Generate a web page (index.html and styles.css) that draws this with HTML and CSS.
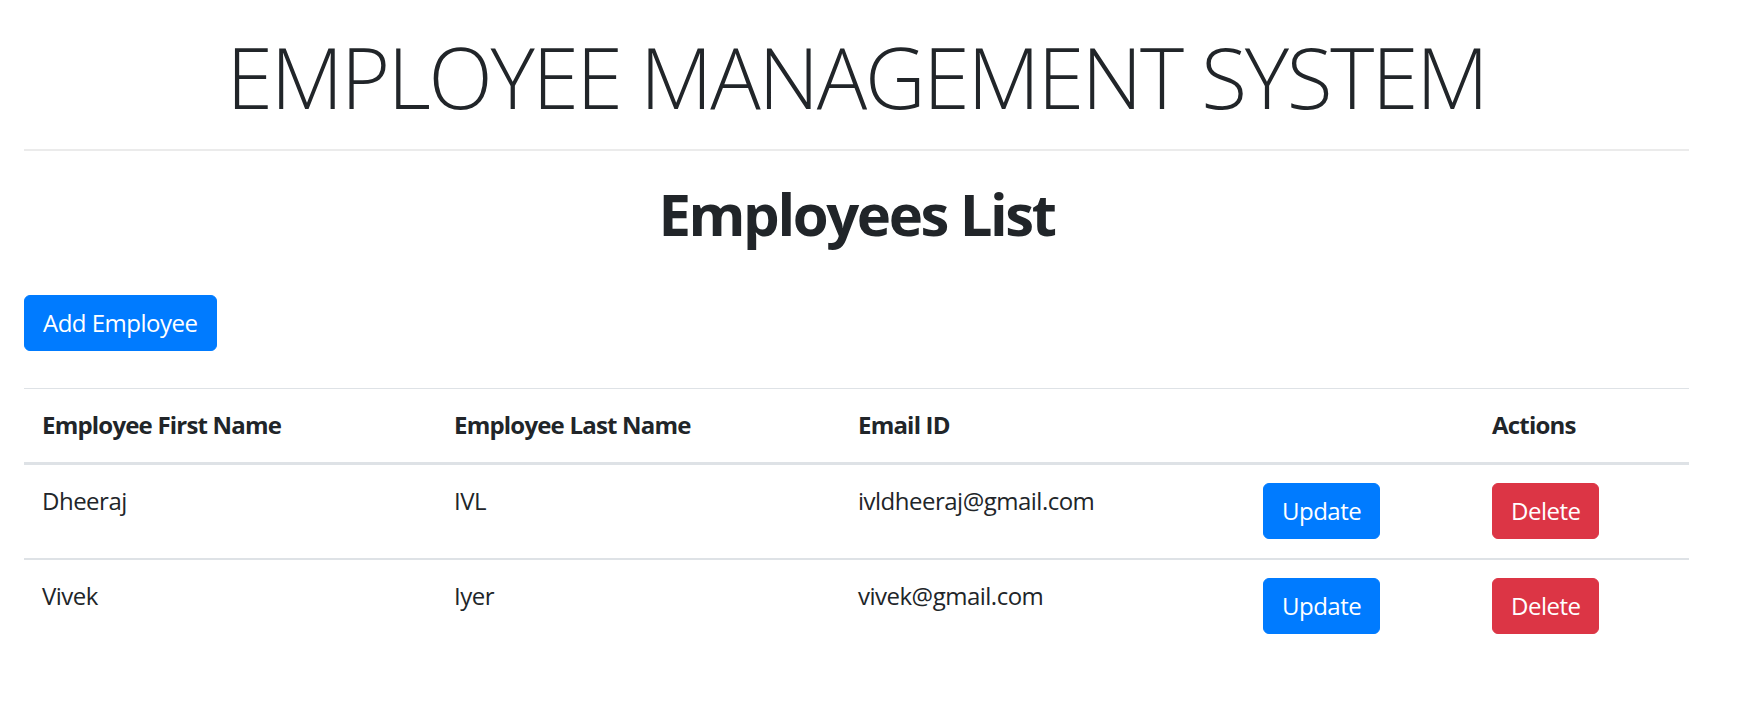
FILE: index.html
```html
<!DOCTYPE html>
<html lang="en">
<head>
<meta charset="utf-8">
<title>Employee Management System</title>
<link rel="stylesheet" href="styles.css">
</head>
<body>
<div class="page">
  <h1 class="display">EMPLOYEE MANAGEMENT SYSTEM</h1>
  <hr class="divider">
  <h2 class="list-title">Employees List</h2>
  <div class="toolbar">
    <button class="btn btn-primary">Add Employee</button>
  </div>
  <table class="emp-table">
    <colgroup>
      <col class="c1"><col class="c2"><col class="c3"><col class="c4"><col class="c5">
    </colgroup>
    <thead>
      <tr>
        <th>Employee First Name</th>
        <th>Employee Last Name</th>
        <th>Email ID</th>
        <th></th>
        <th>Actions</th>
      </tr>
    </thead>
    <tbody>
      <tr>
        <td>Dheeraj</td>
        <td>IVL</td>
        <td>ivldheeraj@gmail.com</td>
        <td><button class="btn btn-primary">Update</button></td>
        <td><button class="btn btn-danger">Delete</button></td>
      </tr>
      <tr>
        <td>Vivek</td>
        <td>Iyer</td>
        <td>vivek@gmail.com</td>
        <td><button class="btn btn-primary">Update</button></td>
        <td><button class="btn btn-danger">Delete</button></td>
      </tr>
    </tbody>
  </table>
</div>
</body>
</html>
```

FILE: styles.css
```css
* { box-sizing: border-box; }

body {
  margin: 0;
  background: #ffffff;
  color: #212529;
  font-family: "Open Sans", "Noto Sans", sans-serif;
  font-size: 24px;
  line-height: 1.5;
  letter-spacing: -0.5px;
}

.page {
  padding: 0 73px 0 24px;
}

.display {
  margin: 27px 0 0;
  font-size: 84px;
  font-weight: 300;
  line-height: 1.2;
  letter-spacing: -2.3px;
  text-align: center;
}

.divider {
  margin: 21px 0 0;
  border: 0;
  border-top: 2px solid #ebebeb;
  height: 0;
}

.list-title {
  margin: 27px 0 0;
  font-size: 58px;
  font-weight: 700;
  line-height: 72px;
  letter-spacing: -2.4px;
  text-align: center;
}

.toolbar {
  margin-top: 45px;
}

.btn {
  display: inline-block;
  font-family: inherit;
  font-size: 24px;
  line-height: 36px;
  font-weight: 400;
  letter-spacing: -0.5px;
  padding: 9px 18px;
  border: 1.5px solid transparent;
  border-radius: 6px;
  color: #ffffff;
  cursor: pointer;
}

.btn-primary {
  background: #007bff;
  border-color: #007bff;
}

.btn-danger {
  background: #dc3545;
  border-color: #dc3545;
}

.emp-table {
  margin-top: 37px;
  width: 100%;
  border-collapse: collapse;
  table-layout: fixed;
}

.c1 { width: 412px; }
.c2 { width: 404px; }
.c3 { width: 405px; }
.c4 { width: 229px; }
.c5 { width: 215px; }

.emp-table th,
.emp-table td {
  padding: 18px 18px 19px;
  text-align: left;
  vertical-align: top;
}

.emp-table th {
  font-weight: 700;
  letter-spacing: -0.8px;
  border-top: 1px solid #dee2e6;
  border-bottom: 3px solid #dee2e6;
}

.emp-table tbody tr + tr td {
  border-top: 2px solid #dee2e6;
}
```
